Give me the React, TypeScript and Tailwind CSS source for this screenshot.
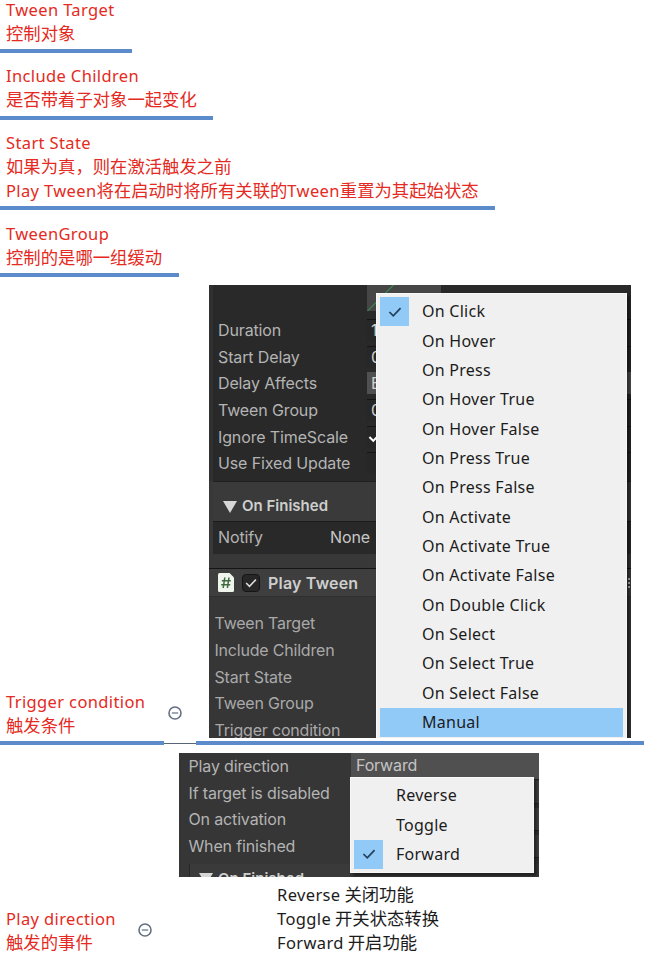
import React from 'react';

const triggerOptions = [
  'On Click',
  'On Hover',
  'On Press',
  'On Hover True',
  'On Hover False',
  'On Press True',
  'On Press False',
  'On Activate',
  'On Activate True',
  'On Activate False',
  'On Double Click',
  'On Select',
  'On Select True',
  'On Select False',
  'Manual',
];

const tweenerFields = [
  { label: 'Duration', value: '1' },
  { label: 'Start Delay', value: '0' },
  { label: 'Delay Affects', value: 'B', popup: true },
  { label: 'Tween Group', value: '0' },
  { label: 'Ignore TimeScale', value: '', checked: true },
  { label: 'Use Fixed Update', value: '' },
];

const playTweenFields = ['Tween Target', 'Include Children', 'Start State', 'Tween Group', 'Trigger condition'];

const directionFields = ['Play direction', 'If target is disabled', 'On activation', 'When finished'];

const Check = ({ className, width = 2 }: { className: string; width?: number }) => (
  <svg viewBox="0 0 16 14" className={className} fill="none" stroke="currentColor" strokeWidth={width}>
    <path d="M1.5 7 L6 11.5 L14.5 2.5" />
  </svg>
);

const Triangle = () => (
  <svg viewBox="0 0 14 12" className="h-3 w-3.5 shrink-0 fill-[#d6d6d6]">
    <path d="M0 0 H14 L7 12 Z" />
  </svg>
);

// C# script icon, a page with a clipped corner
const ScriptIcon = () => (
  <svg viewBox="0 0 16 19" className="h-[19px] w-4 shrink-0" fill="none">
    <path d="M1.5 0 H11.5 L16 4.5 V17.5 Q16 19 14.5 19 H1.5 Q0 19 0 17.5 V1.5 Q0 0 1.5 0 Z" fill="#eff5ed" />
    <path d="M6.8 4.5 L5.2 15 M11 4.5 L9.4 15 M3.8 7.8 H12.8 M3.2 11.7 H12.2" stroke="#3f6b3f" strokeWidth="1.5" />
  </svg>
);

// Latin part of a line, slightly smaller than the CJK glyphs around it
const En = ({ children }: { children: React.ReactNode }) => (
  <span className="font-['Noto_Sans'] text-[16.5px] tracking-[0.37px]">{children}</span>
);

const Line = ({ children }: { children: React.ReactNode }) => (
  <div className="h-6 whitespace-nowrap leading-[22px]">{children}</div>
);

const Collapse = () => (
  <svg viewBox="0 0 14 14" className="h-3.5 w-3.5 shrink-0" fill="none">
    <circle cx="7" cy="7" r="6" stroke="#667083" strokeWidth="1.6" />
    <path d="M3.8 7 H10.2" stroke="#667083" strokeWidth="1.2" />
  </svg>
);

interface MenuProps {
  items: string[];
  checked: string;
  selected?: string;
  className: string;
}

const Menu = ({ items, checked, selected, className }: MenuProps) => (
  <ul
    className={`absolute border border-[#f8f8f8] bg-[#f0f0f0] p-[3px] font-['Noto_Sans'] text-[16px] tracking-[0.26px] text-[#1c1c1c] shadow-[3px_3px_3px_rgba(0,0,0,0.45)] ${className}`}
  >
    {items.map((item) => (
      <li
        key={item}
        className={`flex h-[29.35px] items-center whitespace-nowrap ${item === selected ? 'bg-[#91c9f7]' : ''}`}
      >
        <span
          className={`mr-[13px] flex h-full w-[29px] items-center justify-center ${item === checked ? 'bg-[#91c9f7]' : ''}`}
        >
          {item === checked && <Check className="h-3 w-3.5 text-[#23415c]" width={2} />}
        </span>
        <span className="pb-px">{item}</span>
      </li>
    ))}
  </ul>
);

const TriggerInspector = () => (
  <div className="relative h-[453px] w-[422px] overflow-hidden bg-[#292929] font-['Inter'] text-[16px] tracking-[-0.13px] text-[#b4b4b4]">
    <div className="flex h-[31.5px]">
      <div className="w-[158px] border-l-4 border-[#303030]" />
      <div className="h-[26px] w-[74px] bg-[#464646]">
        <svg viewBox="0 0 74 26" className="h-full w-full" fill="none" stroke="#2fae57">
          <path d="M0.5 26 L26.5 0" />
        </svg>
      </div>
    </div>
    <div className="h-[164.5px] border-l-4 border-[#303030]">
      {tweenerFields.map((field) => (
        <div key={field.label} className="flex h-[26.7px] items-center pl-[5px]">
          <span className="w-[149px] whitespace-nowrap">{field.label}</span>
          <span
            className={`flex h-[22px] flex-1 items-center pl-1 text-[#d0d0d0] ${
              field.popup ? 'bg-[#505050]' : 'border-t border-[#151515] bg-[#272727]'
            }`}
          >
            {field.checked ? <Check className="-ml-1 h-3 w-4 text-white" width={2.4} /> : field.value}
          </span>
        </div>
      ))}
    </div>
    <div className="border-l-4 border-[#383838]">
      <div className="flex h-[41px] items-center gap-[5px] border-b border-t border-b-[#1b1b1b] border-t-[#202020] bg-[#3a3a3a] pl-[10px] pt-2.5 text-[15px] font-semibold tracking-normal text-[#cecece]">
        <Triangle />
        On Finished
      </div>
      <div className="flex h-[32px] items-center pb-0.5 pl-[5px]">
        <span className="w-[112px]">Notify</span>
        <span className="text-[#c8c8c8]">None</span>
      </div>
    </div>
    <div className="h-[14px] bg-[#383838]" />
    <div className="flex h-[29px] items-center border-b border-t border-b-[#303030] border-t-[#151515] bg-[#3e3e3e] pl-[9px] pr-px font-semibold tracking-[0.2px] text-[#cecece]">
      <ScriptIcon />
      <span className="ml-2 mr-2 flex h-[18px] w-[18px] items-center justify-center rounded-sm border border-[#151515] bg-[#272727]">
        <Check className="h-3 w-3 text-[#dedede]" />
      </span>
      Play Tween
      <svg viewBox="0 0 2 12" className="ml-auto h-3 w-0.5 fill-[#c4c4c4]">
        <path d="M0 1 H2 V3 H0 Z M0 5 H2 V7 H0 Z M0 9 H2 V11 H0 Z" />
      </svg>
    </div>
    <div className="h-[141px] bg-[#363636] pl-[5.5px] pt-[13px] tracking-[-0.2px] text-[#a9a9a9]">
      {playTweenFields.map((label) => (
        <div key={label} className="flex h-[26.7px] items-center whitespace-nowrap">
          {label}
        </div>
      ))}
    </div>
    <Menu
      items={triggerOptions}
      checked="On Click"
      selected="Manual"
      className="left-[167px] top-2 w-[251px]"
    />
  </div>
);

const DirectionInspector = () => (
  <div className="relative h-[124px] w-[360px] overflow-hidden bg-[#363636] pl-[9.5px] font-['Inter'] text-[16px] tracking-[-0.15px] text-[#b4b4b4]">
    {directionFields.map((label, i) => (
      <div key={label} className="flex h-[26.6px] items-center whitespace-nowrap">
        <span className="w-[162.5px] shrink-0">{label}</span>
        <span
          className={`flex flex-1 items-center border-b border-[#262626] pl-[5px] text-[#c4c4c4] ${
            i === 0 ? 'h-full bg-[#505050] pb-0.5' : 'h-[23px] bg-[#444444]'
          }`}
        >
          {i === 0 && 'Forward'}
        </span>
      </div>
    ))}
    <div className="mt-[5px] flex h-7 items-center gap-[5px] border-l border-[#262626] bg-[#3a3a3a] pl-[9.5px] pt-0.5 text-[15px] font-semibold tracking-normal text-[#cecece]">
      <Triangle />
      On Finished
    </div>
    <Menu items={['Reverse', 'Toggle', 'Forward']} checked="Forward" className="left-[171px] top-6 w-[184px]" />
  </div>
);

const App = () => (
  <main className="flex h-[954px] w-[661px] flex-col overflow-hidden bg-white font-['Noto_Sans_CJK_SC',sans-serif] text-[17.35px] text-[#e42a22]">
    <section className="-mt-0.5 flex flex-col items-start">
      <div className="w-[132px] border-b-4 border-[#5b8bcb] pb-[3px] pl-1.5">
        <Line><En>Tween Target</En></Line>
        <Line>控制对象</Line>
      </div>
      <div className="mt-[11px] w-[213px] border-b-4 border-[#5b8bcb] pb-[3.5px] pl-1.5">
        <Line><En>Include Children</En></Line>
        <Line>是否带着子对象一起变化</Line>
      </div>
      <div className="mt-[11.5px] w-[495px] border-b-4 border-[#5b8bcb] pb-[3px] pl-1.5">
        <Line><En>Start State</En></Line>
        <Line>如果为真，则在激活触发之前</Line>
        <Line><En>Play Tween</En>将在启动时将所有关联的<En>Tween</En>重置为其起始状态</Line>
      </div>
      <div className="mt-3 w-[179px] border-b-4 border-[#5b8bcb] pb-[3px] pl-1.5">
        <Line><En>TweenGroup</En></Line>
        <Line>控制的是哪一组缓动</Line>
      </div>
    </section>

    <section className="mt-2 flex h-[460px] shrink-0 items-end">
      <div className="w-[164px] border-b-4 border-[#5b8bcb] pb-[3px] pl-1.5">
        <Line><En>Trigger condition</En></Line>
        <Line>触发条件</Line>
      </div>
      <div className="flex w-8 flex-col items-start pb-[1.5px]">
        <div className="pl-[3.5px]"><Collapse /></div>
        <div className="mt-[23px] h-px w-full bg-[#596675]" />
      </div>
      <div className="h-[460px] w-[448px] border-b-4 border-[#5b8bcb] pl-[13px]">
        <TriggerInspector />
      </div>
    </section>

    <section className="mt-2 flex shrink-0">
      <div className="w-[138px] pl-1.5 pt-[154px]">
        <Line><En>Play direction</En></Line>
        <Line>触发的事件</Line>
      </div>
      <div className="pt-[170px]"><Collapse /></div>
      <div className="ml-[27px]">
        <DirectionInspector />
        <div className="pl-[98px] pt-1.5 text-[#1c1c1c]">
          <Line><En>Reverse</En> 关闭功能</Line>
          <Line><En>Toggle</En> 开关状态转换</Line>
          <Line><En>Forward</En> 开启功能</Line>
        </div>
      </div>
    </section>
  </main>
);

export default App;
